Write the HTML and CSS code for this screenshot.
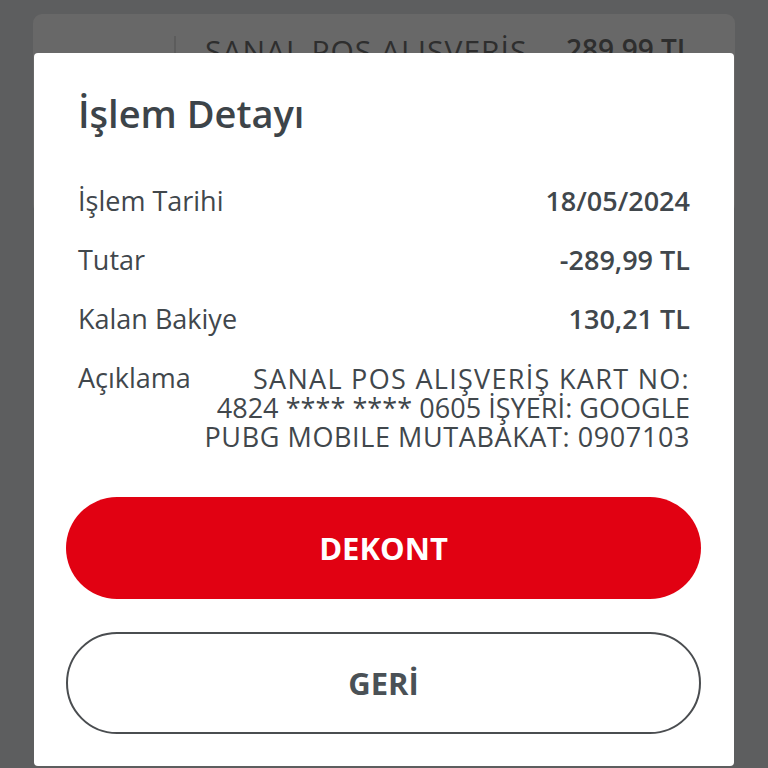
FILE: index.html
```html
<!DOCTYPE html>
<html lang="tr">
<head>
<meta charset="utf-8">
<title>İşlem Detayı</title>
<link rel="stylesheet" href="styles.css">
</head>
<body>
<div class="screen">
  <div class="bg-card">
    <div class="bg-row">
      <div class="bg-left"></div>
      <div class="bg-divider"></div>
      <span class="bg-desc">SANAL POS ALIŞVERİŞ</span>
      <span class="bg-amt">289,99 TL</span>
    </div>
  </div>
  <div class="modal">
    <h1 class="title">İşlem Detayı</h1>
    <div class="rows">
      <div class="row"><span class="label">İşlem Tarihi</span><span class="value">18/05/2024</span></div>
      <div class="row"><span class="label">Tutar</span><span class="value">-289,99 TL</span></div>
      <div class="row"><span class="label">Kalan Bakiye</span><span class="value">130,21 TL</span></div>
      <div class="row row-desc"><span class="label">Açıklama</span><span class="value value-desc"><span class="line line-wide">SANAL POS ALIŞVERİŞ KART NO:</span><span class="line line-tight">4824 **** **** 0605 İŞYERİ: GOOGLE</span><span class="line">PUBG MOBILE MUTABAKAT: 0907103</span></span></div>
    </div>
    <div class="actions">
      <button class="btn btn-primary">DEKONT</button>
      <button class="btn btn-outline">GERİ</button>
    </div>
  </div>
</div>
</body>
</html>
```
FILE: styles.css
```css
* { box-sizing: border-box; }
html, body { margin: 0; padding: 0; }
body {
  width: 768px;
  height: 768px;
  overflow: hidden;
  background: #5d5e5f;
  font-family: "Open Sans", "Lato", sans-serif;
}
.screen {
  position: relative;
  width: 768px;
  height: 768px;
  padding-top: 14px;
}
.bg-card {
  margin: 0 33px;
  height: 200px;
  background: #686868;
  border-radius: 9px;
}
.bg-row {
  display: flex;
  align-items: flex-start;
  height: 100%;
}
.bg-left { width: 141px; }
.bg-divider {
  width: 2px;
  margin-top: 22px;
  height: 60px;
  background: #5c5c5c;
}
.bg-desc {
  margin-left: 29px;
  margin-top: 16px;
  font-size: 30px;
  letter-spacing: 1px;
  color: #2e2e2e;
}
.bg-amt {
  margin-left: auto;
  margin-right: 43px;
  margin-top: 16px;
  font-size: 28px;
  font-weight: 600;
  color: #2e2e2e;
}
.modal {
  position: absolute;
  left: 34px;
  top: 53px;
  width: 700px;
  height: 713px;
  background: #ffffff;
  border-radius: 4px;
  padding: 30px 44px 0 44px;
  color: #3f464b;
}
.title {
  margin: 0;
  font-size: 38px;
  font-weight: 600;
  line-height: 60px;
  color: #3d4449;
}
.rows {
  margin-top: 40px;
  display: flex;
  flex-direction: column;
  gap: 23px;
}
.row {
  display: flex;
  justify-content: space-between;
  align-items: flex-start;
  font-size: 27px;
  line-height: 36px;
}
.label { color: #41474c; white-space: nowrap; }
.value { font-weight: 600; color: #41474c; white-space: nowrap; }
.value-desc {
  display: flex;
  flex-direction: column;
  align-items: flex-end;
  font-weight: 400;
  letter-spacing: 0.6px;
  margin-left: 8px;
  margin-top: 4px;
}
.line {
  display: block;
  height: 29px;
  line-height: 29px;
}
.line-wide { letter-spacing: 1.3px; }
.line-tight { letter-spacing: 0.05px; }
.actions {
  margin-top: 46px;
  margin-left: -12px;
  margin-right: -11px;
  display: flex;
  flex-direction: column;
  gap: 33px;
}
.btn {
  height: 102px;
  border-radius: 51px;
  font-family: inherit;
  font-size: 31px;
  font-weight: 700;
  cursor: pointer;
}
.btn-primary {
  background: #e10112;
  color: #ffffff;
  border: none;
}
.btn-outline {
  background: #ffffff;
  color: #4a5156;
  border: 2px solid #4a4d50;
}
```
